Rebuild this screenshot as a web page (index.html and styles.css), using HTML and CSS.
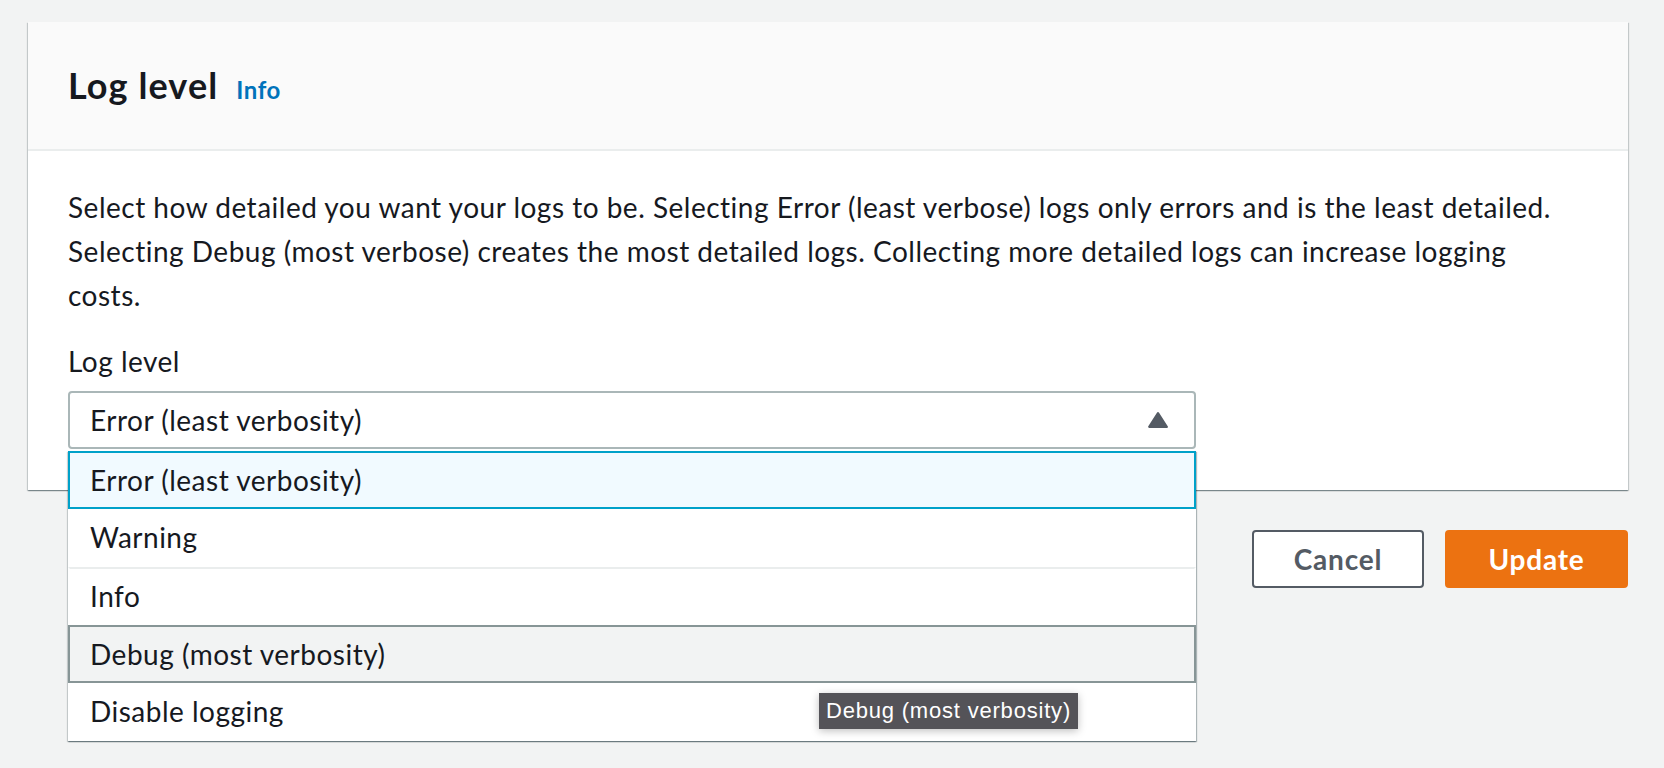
FILE: index.html
```html
<!DOCTYPE html>
<html lang="en">
<head>
<meta charset="utf-8">
<title>Log level</title>
<link rel="stylesheet" href="styles.css">
</head>
<body>
<main class="page">
  <section class="container">
    <header class="container-header">
      <h2 class="title">Log level</h2>
      <a class="info-link" href="#">Info</a>
    </header>
    <div class="container-body">
      <p class="desc">Select how detailed you want your logs to be. Selecting Error (least verbose) logs only errors and is the least detailed. Selecting Debug (most verbose) creates the most detailed logs. Collecting more detailed logs can increase logging costs.</p>
      <div class="field">
        <label class="field-label">Log level</label>
        <div class="select-wrap">
          <button class="select-trigger" type="button">
            <span>Error (least verbosity)</span>
            <svg class="caret" width="20" height="16" viewBox="0 0 20 16" aria-hidden="true"><path d="M10 1.2 L18.8 14.8 H1.2 Z" fill="#545b64" stroke="#545b64" stroke-width="2.2" stroke-linejoin="round"/></svg>
          </button>
          <ul class="dropdown">
            <li class="option option-selected">Error (least verbosity)</li>
            <li class="option">Warning</li>
            <li class="option option-sep">Info</li>
            <li class="option option-hover">Debug (most verbosity)</li>
            <li class="option">Disable logging</li>
          </ul>
        </div>
      </div>
    </div>
  </section>
  <div class="actions">
    <button class="btn btn-normal" type="button">Cancel</button>
    <button class="btn btn-primary" type="button">Update</button>
  </div>
</main>
<div class="tooltip">Debug (most verbosity)</div>
</body>
</html>
```
FILE: styles.css
```css
* { box-sizing: border-box; }
html, body { margin: 0; padding: 0; }
body {
  background: #f2f3f3;
  font-family: Lato, "Noto Sans", sans-serif;
  color: #16191f;
  font-size: 28px;
  line-height: 44px;
  letter-spacing: 0.5px;
  width: 1664px;
  height: 768px;
  overflow: hidden;
  position: relative;
}
.page {
  padding: 22px 36px 0 28px;
}
.container {
  background: #fff;
  box-shadow: 0 1px 1px 0 rgba(0,28,36,.3), 1px 1px 1px 0 rgba(0,28,36,.15), -1px 1px 1px 0 rgba(0,28,36,.15);
}
.container-header {
  background: #fafafa;
  border-bottom: 2px solid #eaeded;
  padding: 41px 40px 42px;
  height: 129px;
  display: flex;
  align-items: baseline;
}
.title {
  margin: 0;
  font-size: 36px;
  line-height: 44px;
  font-weight: 700;
  letter-spacing: 1.1px;
}
.info-link {
  margin-left: 18px;
  font-size: 24px;
  line-height: 24px;
  font-weight: 700;
  letter-spacing: 0.6px;
  color: #0073bb;
  text-decoration: none;
}
.container-body {
  padding: 34px 40px 41px;
}
.desc {
  margin: 0 0 22px;
  max-width: 1490px;
}
.field-label {
  display: block;
  margin-bottom: 8px;
}
.select-wrap {
  position: relative;
  width: 1128px;
}
.select-trigger {
  width: 100%;
  height: 58px;
  display: flex;
  align-items: center;
  justify-content: space-between;
  padding: 0 26px 0 20px;
  background: #fff;
  border: 2px solid #aab7b8;
  border-radius: 4px;
  font: inherit;
  letter-spacing: inherit;
  color: #16191f;
  text-align: left;
}
.caret { display: block; }
.dropdown {
  position: absolute;
  left: 0;
  right: 0;
  top: calc(100% + 2px);
  margin: 0;
  padding: 0;
  list-style: none;
  background: #fff;
  z-index: 5;
  box-shadow: 0 1px 1px 0 rgba(0,28,36,.3), 1px 1px 1px 0 rgba(0,28,36,.25), -1px 1px 1px 0 rgba(0,28,36,.15);
}
.option {
  height: 58px;
  display: flex;
  align-items: center;
  padding: 0 20px;
  border: 2px solid transparent;
  border-top-width: 0;
}
.option-sep {
  border-top: 2px solid #eaeded;
  height: 58px;
}
.option-selected {
  background: #f1faff;
  border: 2px solid #00a1c9;
}
.option-hover {
  background: #f2f3f3;
  border: 2px solid #879596;
}
.actions {
  display: flex;
  justify-content: flex-end;
  gap: 21px;
  margin-top: 40px;
}
.btn {
  height: 58px;
  border-radius: 4px;
  border: 2px solid;
  font: inherit;
  font-weight: 700;
  letter-spacing: 0.8px;
  padding: 0;
}
.btn-normal {
  background: #fff;
  border-color: #545b64;
  color: #545b64;
  width: 172px;
}
.btn-primary {
  background: #ec7211;
  border-color: #ec7211;
  color: #fff;
  width: 183px;
}
.tooltip {
  position: absolute;
  left: 819px;
  top: 693px;
  height: 36px;
  padding: 0 7px;
  background: #545358;
  color: #fff;
  font-family: "Liberation Sans", Arial, sans-serif;
  font-size: 22px;
  letter-spacing: 0.8px;
  line-height: 36px;
  box-shadow: 0 2px 8px rgba(0,0,0,.25);
  z-index: 10;
  white-space: nowrap;
}
```
